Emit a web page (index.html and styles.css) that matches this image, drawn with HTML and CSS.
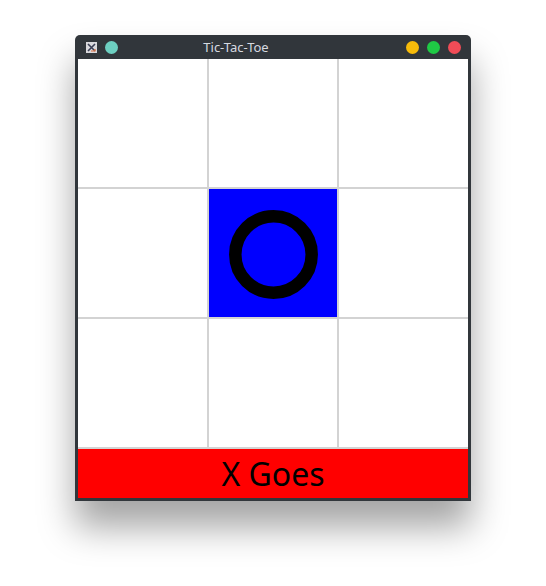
FILE: index.html
```
<!DOCTYPE html>
<html>
<head>
<meta charset="utf-8">
<title>Tic-Tac-Toe</title>
<link rel="stylesheet" href="styles.css">
</head>
<body>
<div class="page">
<div class="window">
  <div class="titlebar">
    <div class="left-group">
      <svg class="app-icon" width="11" height="11" viewBox="0 0 11 11">
        <rect x="0" y="0" width="11" height="11" fill="#d8d8dc"/>
        <path d="M2 2 L9 9 M9 2 L2 9" stroke="#3a3f55" stroke-width="1.6"/>
        <path d="M5 9 L9 9 L9 7" stroke="#e07040" stroke-width="1.2" fill="none"/>
      </svg>
      <span class="dot teal"></span>
    </div>
    <div class="title">Tic-Tac-Toe</div>
    <div class="right-group">
      <span class="dot yellow"></span>
      <span class="dot green"></span>
      <span class="dot red"></span>
    </div>
  </div>
  <div class="content">
    <div class="board">
      <div class="cell"></div>
      <div class="cell"></div>
      <div class="cell"></div>
      <div class="cell"></div>
      <div class="cell cell-o">
        <svg width="128" height="128" viewBox="0 0 128 128">
          <circle cx="64.5" cy="65.5" r="38.2" fill="none" stroke="#000" stroke-width="12.5"/>
        </svg>
      </div>
      <div class="cell"></div>
      <div class="cell"></div>
      <div class="cell"></div>
      <div class="cell"></div>
    </div>
    <div class="status">X Goes</div>
  </div>
</div>
</div>
</body>
</html>
```
FILE: styles.css
```
html, body {
  margin: 0;
  padding: 0;
  background: #ffffff;
}

body {
  font-family: "Noto Sans", "DejaVu Sans", sans-serif;
}

.page {
  min-height: 586px;
  padding-top: 35px;
  box-sizing: border-box;
}

.window {
  width: 390px;
  margin: 0 auto;
  padding: 0 3px 3px;
  background: #31363b;
  border-radius: 5px 5px 0 0;
  box-shadow: 0 26px 36px rgba(0, 0, 0, 0.36);
}

.titlebar {
  height: 24px;
  display: flex;
  align-items: center;
}

.left-group {
  display: flex;
  align-items: center;
  gap: 8px;
  padding-left: 8px;
}

.app-icon {
  display: block;
}

.dot {
  width: 13px;
  height: 13px;
  border-radius: 50%;
  display: block;
}

.teal { background: #6dcfc1; }
.yellow { background: #f7bb0a; }
.green { background: #1fca45; }
.red { background: #f04c57; }

.title {
  flex: 1;
  text-align: center;
  padding-right: 52px;
  color: #d6dae0;
  font-size: 13px;
  line-height: 24px;
}

.right-group {
  display: flex;
  align-items: center;
  gap: 8px;
  padding-right: 7px;
}

.content {
  width: 390px;
  background: #ffffff;
}

.board {
  display: grid;
  grid-template-columns: 129px 128px 129px;
  grid-template-rows: 128px 128px 128px;
  gap: 2px;
  padding-bottom: 2px;
  background: #d3d3d3;
}

.cell {
  background: #ffffff;
}

.cell-o {
  background: #0000ff;
}

.cell-o svg {
  display: block;
}

.status {
  height: 49px;
  background: #ff0000;
  color: #000000;
  font-size: 32px;
  display: flex;
  align-items: center;
  justify-content: center;
}
```
